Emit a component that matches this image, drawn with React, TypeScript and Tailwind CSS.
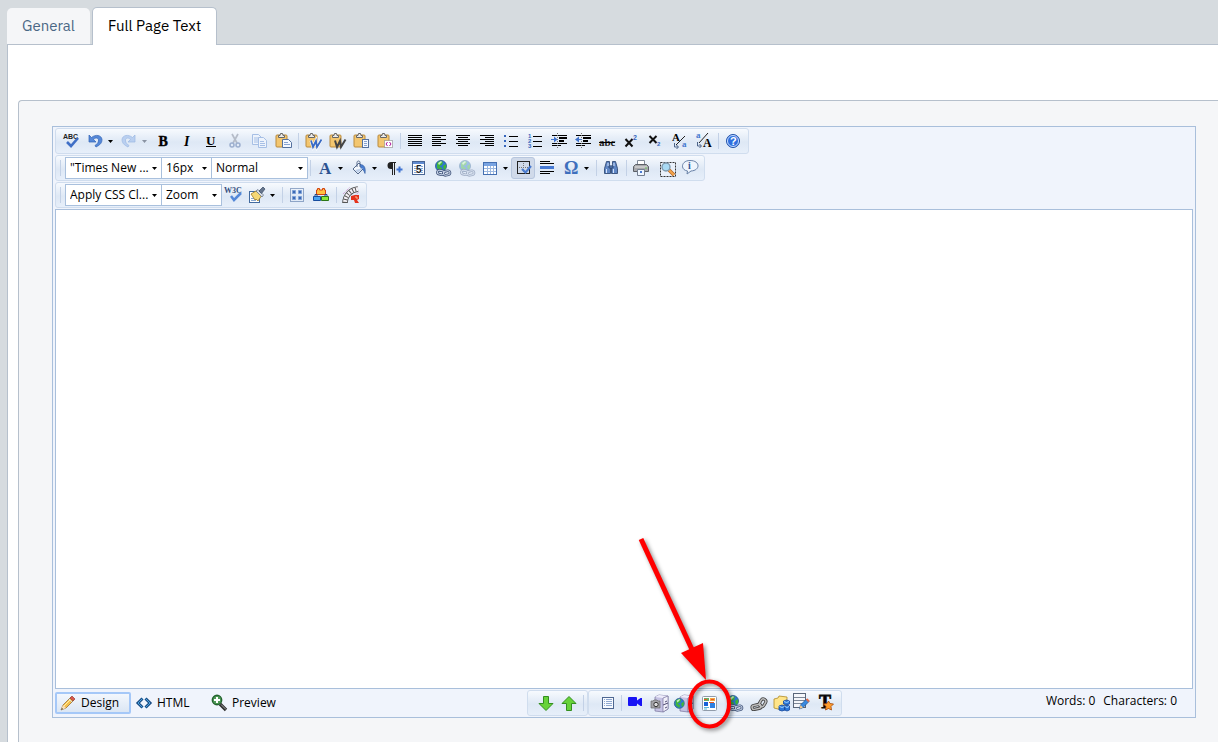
import React, { useState } from 'react';

type IconName = keyof typeof icons;

const bars = (rows: number[][], color = '#000') =>
  rows.map(([x, y, w], i) => <rect key={i} x={x} y={y} width={w} height="1" fill={color} />);

const clipboard = (
  <>
    <rect x="1" y="2" width="11" height="12" rx="1" fill="#f3c66f" stroke="#b98a3e" />
    <path d="M3.500 4.500V2.500H5L5.500 0.500h2L8 2.500h1.500v2z" fill="#ececec" stroke="#666" />
  </>
);

const cabinet = (
  <>
    <path d="M4 2l4-2 9 1v13l-5 3-8-1z" fill="#c5c2e3" stroke="#77739c" strokeWidth=".7" />
    <path d="M4 2l8 1 5-2-9-1z" fill="#eeedfb" />
    <path d="M12 3v14l5-3V1z" fill="#f1f0fa" stroke="#77739c" strokeWidth=".7" />
    <path d="M12 10l5-2M14 7l2-1M14 13l2-1" stroke="#4f4b72" fill="none" />
  </>
);

const globe = (
  <>
    <circle cx="7" cy="6" r="5.500" fill="#2f77d0" stroke="#285a86" strokeWidth=".8" />
    <path d="M3 3l3-2 3 1-1 3-3 1 3 2-1 3-4-3zM9 6l3-2v4l-2 2z" fill="#3fb53b" />
    <path d="M4 3l3-2 1 1-3 3z" fill="#c9f3bd" />
  </>
);

const chain = (
  <g fill="none">
    <g strokeWidth="2.600" stroke="#44577c">
      <rect x="3.500" y="10.500" width="6.500" height="4" rx="2" transform="rotate(12 7 12)" />
      <rect x="9.500" y="11" width="6.500" height="4" rx="2" transform="rotate(-12 13 13)" />
    </g>
    <g strokeWidth="1" stroke="#c6d2e6">
      <rect x="3.500" y="10.500" width="6.500" height="4" rx="2" transform="rotate(12 7 12)" />
      <rect x="9.500" y="11" width="6.500" height="4" rx="2" transform="rotate(-12 13 13)" />
    </g>
  </g>
);

const serif = { fontFamily: 'Liberation Serif, serif' };

const icons = {
  spell: (
    <>
      <text x="0" y="6" fontSize="7" fontWeight="bold" fontFamily="Liberation Sans, sans-serif" fill="#222">ABC</text>
      <path d="M4 9l4 4 7-8" fill="none" stroke="#3f6fc6" strokeWidth="2.600" />
    </>
  ),
  undo: (
    <path d="M2 2v7h7L6.500 6.500C9 4 12 5 11.500 8c-.3 2-1.500 3-3.500 4.500l1 1.500c4-2 6-4 6-7.500C14.500 2 8.500 1 4.500 4.500z" fill="#5588d8" stroke="#2f62b5" strokeWidth=".7" />
  ),
  redo: (
    <path d="M14 2v7H7l2.500-2.500C7 4 4 5 4.500 8c.3 2 1.500 3 3.500 4.500L7 14C3 12 1 10 1 6.500 1.500 2 7.500 1 11.500 4.500z" fill="#b9cff0" stroke="#9bb8e2" strokeWidth=".7" />
  ),
  bold: <text x="3.500" y="12.500" fontSize="14" fontWeight="bold" stroke="#000" strokeWidth=".4" {...serif}>B</text>,
  italic: <text x="5" y="12.500" fontSize="14" fontWeight="bold" fontStyle="italic" {...serif}>I</text>,
  underline: (
    <>
      <text x="3" y="11.500" fontSize="13" fontWeight="bold" {...serif}>U</text>
      <rect x="3" y="13" width="10" height="1" />
    </>
  ),
  cut: (
    <g fill="none" stroke="#9cafcf">
      <path d="M5 1l5 9M11 1l-5 9" strokeWidth="1.700" stroke="#b5bcc8" />
      <circle cx="5" cy="12" r="2" strokeWidth="1.500" />
      <circle cx="11" cy="12" r="2" strokeWidth="1.500" />
    </g>
  ),
  copy: (
    <g fill="#edf3fc" stroke="#a6bfe5">
      <path d="M1.500 1.500h6l3 3v7h-9z" />
      <path d="M3 5h5M3 7h5M3 9h5" />
      <path d="M7.500 4.500h5l3 3v7h-8z" />
      <path d="M9 8.500h4M9 10.500h5M9 12.500h5" />
    </g>
  ),
  paste: (
    <>
      {clipboard}
      <path d="M7.500 6.500h6l3 3v5h-9z" fill="#f4f8ff" stroke="#54719e" />
      <path d="M9 9.500h4M9 11.500h6" stroke="#87a2cf" />
    </>
  ),
  pasteWord: (
    <>
      {clipboard}
      <path d="M6 7.500l2 6.500 3-6 1 6 4.500-7.500" fill="none" stroke="#fff" strokeWidth="3" />
      <path d="M6 7.500l2 6.500 3-6 1 6 4.500-7.500" fill="none" stroke="#3a6bc4" strokeWidth="1.800" />
    </>
  ),
  pasteWordClean: (
    <>
      {clipboard}
      <path d="M6 7.500l2 6.500 3-6 1 6 4.500-7.500" fill="none" stroke="#444" strokeWidth="2" />
    </>
  ),
  pasteText: (
    <>
      {clipboard}
      <rect x="9.500" y="6.500" width="6" height="8" fill="#f4f8ff" stroke="#54719e" />
      <path d="M11 8.500h3M11 10.500h3M11 12.500h3" stroke="#87a2cf" />
    </>
  ),
  pasteHtml: (
    <>
      {clipboard}
      <rect x="7.500" y="7.500" width="8" height="7" fill="#fff" stroke="#777" strokeDasharray="1 1" />
      <path d="M10.500 9L9 11l1.500 2M12.500 9l1.500 2-1.500 2" fill="none" stroke="#b0169c" />
    </>
  ),
  justify: bars([[1, 2, 14], [1, 4, 14], [1, 6, 14], [1, 8, 14], [1, 10, 14], [1, 12, 14]]),
  left: bars([[1, 2, 14], [1, 4, 9], [1, 6, 14], [1, 8, 9], [1, 10, 14], [1, 12, 9]]),
  center: bars([[1, 2, 14], [3, 4, 10], [1, 6, 14], [3, 8, 10], [1, 10, 14], [3, 12, 10]]),
  right: bars([[1, 2, 14], [6, 4, 9], [1, 6, 14], [6, 8, 9], [1, 10, 14], [6, 12, 9]]),
  bullets: (
    <>
      {bars([[6, 3, 9], [6, 8, 9], [6, 13, 9]])}
      <path d="M1 2h2v2H1zM1 7h2v2H1zM1 12h2v2H1z" fill="#3565bd" />
    </>
  ),
  numbers: (
    <>
      {bars([[6, 3, 9], [6, 8, 9], [6, 13, 9]])}
      <g fontSize="6" fontWeight="bold" fill="#3565bd" fontFamily="Liberation Sans, sans-serif">
        <text x="1" y="5">1</text>
        <text x="1" y="10">2</text>
        <text x="1" y="15">3</text>
      </g>
    </>
  ),
  indent: (
    <>
      {bars([[1, 2, 15], [8, 4, 8], [8, 5, 8], [8, 7, 5], [8, 8, 5], [1, 10, 15], [1, 12, 9]])}
      <path d="M6.500 0v15" stroke="#777" strokeDasharray="1 1" />
      <path d="M0 6h3V3.500L6.500 6.500 3 9.500V7H0z" fill="#4073cc" />
    </>
  ),
  outdent: (
    <>
      {bars([[1, 2, 15], [8, 4, 8], [8, 5, 8], [8, 7, 5], [8, 8, 5], [1, 10, 15], [1, 12, 9]])}
      <path d="M6.500 0v15" stroke="#777" strokeDasharray="1 1" />
      <path d="M6.500 6H4V3.500L0 6.500l4 3V7h2.500z" fill="#4073cc" />
    </>
  ),
  strike: (
    <>
      <text x="0" y="13" fontSize="11" fontWeight="bold" fill="#222" {...serif}>abc</text>
      <rect x="0" y="9" width="16" height="1" />
    </>
  ),
  sup: (
    <>
      <path d="M2.500 6l7 7.500M9.500 6l-7 7.500" stroke="#111" strokeWidth="2" />
      <text x="10" y="7" fontSize="7" fontWeight="bold" fill="#3565bd" fontFamily="Liberation Sans, sans-serif">2</text>
    </>
  ),
  sub: (
    <>
      <path d="M2.500 3l7 7M9.500 3l-7 7" stroke="#111" strokeWidth="2" />
      <text x="10" y="13" fontSize="6" fontWeight="bold" fill="#3565bd" fontFamily="Liberation Sans, sans-serif">2</text>
    </>
  ),
  lower: (
    <>
      <text x="1" y="8" fontSize="11" fontWeight="bold" {...serif}>A</text>
      <text x="11" y="14" fontSize="9" fontWeight="bold" fill="#4679cf" {...serif}>a</text>
      <path d="M14 3L5 12" stroke="#222" />
      <path d="M3.500 10v4H7M5.500 12l2 2-2 2" fill="none" stroke="#4b6388" />
    </>
  ),
  upper: (
    <>
      <text x="1" y="5" fontSize="9" fontWeight="bold" fill="#4679cf" {...serif}>a</text>
      <text x="8" y="14" fontSize="12" fontWeight="bold" {...serif}>A</text>
      <path d="M13 0L4 10" stroke="#222" />
      <path d="M2.500 9v4H6M4.500 11l2 2-2 2" fill="none" stroke="#4b6388" />
    </>
  ),
  help: (
    <>
      <circle cx="8" cy="8" r="6.500" fill="#2e6ede" stroke="#2453a8" />
      <circle cx="8" cy="8" r="5.500" fill="none" stroke="#c6dcff" />
      <text x="5" y="12" fontSize="11" fontWeight="bold" fill="#fff" fontFamily="Liberation Sans, sans-serif">?</text>
    </>
  ),
  fore: <text x="2" y="14" fontSize="17" fontWeight="bold" fill="#2d5391" {...serif}>A</text>,
  bucket: (
    <>
      <path d="M2 9l6-6 5 5-6 6z" fill="#f3f7fc" stroke="#566b8c" />
      <path d="M6 7V2.500c0-2 3-2 3 0V7" fill="none" stroke="#566b8c" />
      <path d="M9 4.500c4 0 6 3 5 9-1-3-2-4-4-5z" fill="#4a7ed0" stroke="#2b559a" strokeWidth=".6" />
      <path d="M4 10l3 3 5-5z" fill="#bfd1eb" />
    </>
  ),
  para: (
    <>
      <path d="M10 2H5a3.500 3.500 0 0 0 0 7h1v6h1V3h1v12h1V3h1z" fill="#222" />
      <path d="M13.500 6.500v6M10.500 9.500h6" stroke="#3f73d1" strokeWidth="2" />
    </>
  ),
  style: (
    <>
      <rect x="2.500" y="1.500" width="12" height="13" fill="#fff" stroke="#4a6694" />
      <rect x="3" y="2" width="11" height="2" fill="#608bd0" />
      <path d="M4 6.500h3M4 8.500h3M4 10.500h3M4 12.500h3M11 6.500h2M11 8.500h2M11 10.500h2M11 12.500h2" stroke="#88a7d4" />
      <text x="6" y="13" fontSize="10" fontWeight="bold" fill="#222" fontFamily="Liberation Sans, sans-serif">5</text>
    </>
  ),
  link: <>{globe}{chain}</>,
  unlink: <g opacity=".4">{globe}{chain}</g>,
  table: (
    <>
      <rect x="1.500" y="2.500" width="13" height="12" fill="#fff" stroke="#4570b2" />
      <rect x="2" y="3" width="12" height="3" fill="#79a4e2" />
      <path d="M2 8.500h12M2 11.500h12M5.500 6v8M8.500 6v8M11.500 6v8" stroke="#9db9e1" />
    </>
  ),
  borders: (
    <>
      <rect x="2.500" y="1.500" width="12" height="12" fill="none" stroke="#222" />
      <path d="M8.500 3v10M4 7.500h10" stroke="#777" strokeDasharray="1 1" />
      <path d="M7 9l3.500 3.500L16 6" fill="none" stroke="#4a7bcf" strokeWidth="2.200" />
    </>
  ),
  rule: (
    <>
      {bars([[1, 1, 10], [1, 3, 14], [1, 11, 14], [1, 13, 10]])}
      <rect x="1" y="6" width="14" height="3" fill="#4679d3" />
    </>
  ),
  omega: <text x="1" y="14" fontSize="18" fontWeight="bold" fill="#3e6fbd" {...serif}>Ω</text>,
  find: (
    <g fill="#5f86c4" stroke="#263f6b" strokeWidth=".8">
      <path d="M3.500 1.500h3v3l1 3v6h-6v-5z" />
      <path d="M9.500 1.500h3l2 7v5h-6v-6l1-3z" />
      <path d="M6 6h4v2H6z" />
      <path d="M3.500 9v4M10.500 9v4M5 3v3M11 3v3" stroke="#d5e3fb" strokeWidth="1" />
    </g>
  ),
  print: (
    <>
      <path d="M4.500 6.500v-6h7v6" fill="#fff" stroke="#7f8997" />
      <path d="M.5 6.500l2-2h11l2 2v5H.5z" fill="#a8a9ac" stroke="#5c6067" />
      <path d="M2 7h12" stroke="#e7e7e7" />
      <path d="M4.500 9.500h7v6h-7z" fill="#eff6ff" stroke="#747f90" />
      <path d="M7 11h2v2h-2z" fill="#4c7bd1" />
      <path d="M12 8h2" stroke="#69c25b" />
    </>
  ),
  zoomPage: (
    <>
      <rect x="2.500" y="2.500" width="15" height="14" fill="#e9f0fa" stroke="#333" strokeDasharray="2 1" />
      <path d="M11 10l5 5" stroke="#b26725" strokeWidth="3.600" />
      <path d="M11 10l5 5" stroke="#f6a44b" strokeWidth="2" />
      <circle cx="8" cy="7" r="4" fill="#a9daf4" stroke="#7f99ad" strokeWidth="1.400" />
    </>
  ),
  info: (
    <>
      <path d="M8 .5c10.500 0 10.500 10 1 10.500l-4 3 .5-3C-2 10-1 .5 8 .5z" fill="#eff5fd" stroke="#6780a6" />
      <text x="6" y="9" fontSize="10" fontWeight="bold" fill="#315998" {...serif}>i</text>
    </>
  ),
  w3c: (
    <>
      <text x="-1" y="6" fontSize="8" fontWeight="bold" fill="#334f7e" {...serif}>W3C</text>
      <path d="M6 9l3 4 7-7" fill="none" stroke="#5488d8" strokeWidth="2.500" />
    </>
  ),
  brush: (
    <>
      <rect x=".5" y="4.500" width="10" height="11" fill="#fff" stroke="#426a9f" />
      <path d="M2 11.500h5M2 13.500h5" stroke="#88a7d0" />
      <path d="M2 7l5-3 6 4-4 6-2-2-1 1-2-3z" fill="#f6d875" stroke="#9e7b26" strokeWidth=".8" />
      <path d="M7 4l6 6 1.500-2L9 2.500z" fill="#d8dde5" stroke="#5c6a80" strokeWidth=".7" />
      <path d="M10 4l4-4 2 2-3.500 4.500z" fill="#66758c" stroke="#384a64" strokeWidth=".7" />
    </>
  ),
  moduleGrid: (
    <>
      <rect x="1.500" y="1.500" width="13" height="13" fill="none" stroke="#3b5f96" strokeDasharray="1 1" />
      <path d="M3.500 3.500h3v3h-3zM9.500 3.500h3v3h-3zM3.500 9.500h3v3h-3zM9.500 9.500h3v3h-3z" fill="#3b69b5" stroke="#7fa1d6" />
    </>
  ),
  blocks: (
    <>
      <path d="M4.500 3V1.500h2V3h3V1.500h2V3h1v4.500h-9V3z" fill="#ffc13e" stroke="#d3420f" />
      <path d="M.5 9.500h7v4h-7z" fill="#4aa4ee" stroke="#164b9d" />
      <path d="M8.500 9.500h7v4h-7z" fill="#8be83a" stroke="#2b7617" />
      <path d="M2 9V7.500h2V9M12 9V7.500h2V9" fill="none" stroke="#234c87" />
    </>
  ),
  trackChanges: (
    <>
      <path d="M2 16C2 9 7 3 15 2" fill="none" stroke="#444" strokeWidth="5.500" />
      <path d="M2 16C2 9 7 3 15 2" fill="none" stroke="#f6f3f8" strokeWidth="4" />
      <path d="M2 16C2 9 7 3 15 2" fill="none" stroke="#555" strokeWidth="4" strokeDasharray="1 2" />
      <path d="M0 7l7-7M8 12l8-7" stroke="#c988cc" strokeDasharray="1 1" />
      <path d="M8 9l4-1h4v4l-2 1 2 3h-4l-1-3H8z" fill="#e5311a" />
      <path d="M12 10h2v2" fill="none" stroke="#ffb38a" />
    </>
  ),
  down: <path d="M5.500 1.500h5v7H15l-7 7-7-7h4.500z" fill="#67d239" stroke="#338f1f" />,
  up: <path d="M5.500 15.500h5v-7H15l-7-7-7 7h4.500z" fill="#67d239" stroke="#338f1f" />,
  list: (
    <>
      <rect x="2.500" y="2.500" width="11" height="11" fill="#f7faff" stroke="#4e6791" />
      <path d="M4 4.500h1M4 6.500h1M4 8.500h1M4 10.500h1M6 4.500h6M6 6.500h6M6 8.500h6M6 10.500h6" stroke="#8fa8d0" />
    </>
  ),
  video: <path d="M1 3q0-1 1-1h7q1 0 1 1v2.500L13.500 3H15v8h-1.500L10 8.500V10q0 1-1 1H2q-1 0-1-1z" fill="#1713f5" />,
  camera: (
    <>
      {cabinet}
      <path d="M0 6h2l1-1h3l1 1h2v7H0z" fill="#a4a4a8" stroke="#666" strokeWidth=".7" />
      <circle cx="5" cy="9.500" r="2.200" fill="#ddd" stroke="#333" />
    </>
  ),
  globeCabinet: (
    <>
      {cabinet}
      <g transform="translate(-3 3) scale(.9)">{globe}</g>
    </>
  ),
  gallery: (
    <>
      <rect x="1.500" y="1.500" width="14" height="14" rx="1" fill="#fff" stroke="#919caa" />
      <rect x="3" y="3" width="5" height="3" fill="#69ae64" />
      <rect x="9" y="3" width="5" height="3" fill="#f3a743" />
      <rect x="3" y="7" width="4" height="4" fill="#1761d7" />
      <rect x="9" y="8" width="5" height="5" fill="#2d80e2" />
      <path d="M3 4.500h3M10 4.500h3M8 7.500h5" stroke="#e55b24" />
      <path d="M3 12.500h5M3 14h3" stroke="#5db8db" />
    </>
  ),
  chain: (
    <g fill="none" stroke="#444" strokeWidth="3.200">
      <rect x="1" y="10" width="9" height="4" rx="2" transform="rotate(-12 5 12)" />
      <rect x="8" y="5" width="8" height="5" rx="2.500" transform="rotate(-60 12 8)" />
      <g stroke="#bdbdbd" strokeWidth="1.500">
        <rect x="1" y="10" width="9" height="4" rx="2" transform="rotate(-12 5 12)" />
        <rect x="8" y="5" width="8" height="5" rx="2.500" transform="rotate(-60 12 8)" />
      </g>
    </g>
  ),
  folder: (
    <>
      <path d="M1 4l4-1 1-2 8 1v10l-5 3-8-2z" fill="#ffe58a" stroke="#b08a25" strokeWidth=".8" />
      <path d="M10.500 6l3-1 3 1v3l-3 1-3-1zM6 11l3-1 3 1v4l-3 1-3-1zM11.500 11l2.500-1 2.500 1v4l-2.500 1-2.500-1z" fill="#2b78da" stroke="#15489d" strokeWidth=".8" />
      <path d="M11 6.500l2.500 1 2.500-1M6.500 11.500l2.500 1 2.500-1M12 11.500l2 1 2-1" stroke="#9dd1ff" fill="none" />
    </>
  ),
  edit: (
    <>
      <rect x=".5" y="-1.500" width="12" height="14" fill="#f4f6fa" stroke="#596679" />
      <path d="M1 2.500h11M1 5.500h11M1 8.500h11" stroke="#7c8797" />
      <path d="M6.500 14l1-4 6-6 2.500 2.500-6 6z" fill="#398ae0" stroke="#1e5596" strokeWidth=".8" />
      <path d="M6.500 14l1-4 2.500 2.500z" fill="#f5c68b" />
      <path d="M13.500 4l2.500 2.500" stroke="#e36b47" strokeWidth="2" />
    </>
  ),
  fancyText: (
    <>
      <text x="1" y="13" fontSize="18" fontWeight="bold" stroke="#111" strokeWidth=".8" {...serif}>T</text>
      <path d="M10.500 6l1.500 2.500 3.500.5-2.500 2.500.5 3.500-3-1.500-3 1.500.5-3.500L5.500 9 9 8.500z" fill="#ff9d2d" stroke="#a44a0d" strokeWidth=".8" />
    </>
  ),
  pencil: (
    <>
      <path d="M1 15l2-5 8-8 3 3-8 8z" fill="#f5c04c" stroke="#8b632c" strokeWidth=".7" />
      <path d="M1 15l2-5 3 3z" fill="#f9dfb7" />
      <path d="M1 15l1-2 1 1z" fill="#333" />
      <path d="M10 3l2-2 3 3-2 2z" fill="#d9584b" stroke="#95423b" strokeWidth=".7" />
      <path d="M9 4l3 3" stroke="#d7dde3" />
      <path d="M4 11l6-6" stroke="#fff0a8" />
    </>
  ),
  html: (
    <g fill="none" stroke="#1b4e86" strokeWidth="3">
      <path d="M6.500 3.500L2 8l4.500 4.500M9.500 3.500L14 8l-4.500 4.500" />
      <path d="M6.500 3.500L2 8l4.500 4.500M9.500 3.500L14 8l-4.500 4.500" stroke="#4ba2dd" strokeWidth="1" />
    </g>
  ),
  preview: (
    <>
      <path d="M9 9l6 6" stroke="#2d2d2d" strokeWidth="3.400" />
      <path d="M10 9.500l5 5" stroke="#aaa" strokeWidth="1" />
      <circle cx="6" cy="5" r="4.700" fill="#4e9a56" stroke="#24632f" strokeWidth="1.400" />
      <path d="M6 2v6M3 5h6" stroke="#fff" strokeWidth="2" />
    </>
  ),
};

const Icon: React.FC<{ name: IconName }> = ({ name }) => (
  <svg width="16" height="16" viewBox="0 0 16 16" className="block shrink-0 overflow-visible" aria-hidden="true">
    {icons[name]}
  </svg>
);

const Tool: React.FC<{ name: IconName; label: string; width?: string; active?: boolean; children?: React.ReactNode }> = ({
  name,
  label,
  width = 'w-6',
  active,
  children,
}) => (
  <button
    type="button"
    aria-label={label}
    className={`relative flex h-[22px] shrink-0 items-center justify-center ${width} ${
      active ? 'rounded-[3px] border border-[#b7c6de] bg-[#d0daea]' : ''
    }`}
  >
    <Icon name={name} />
    {children}
  </button>
);

const SplitTool: React.FC<{ name: IconName; label: string; width?: string; dim?: boolean }> = ({
  name,
  label,
  width = 'w-[34px]',
  dim,
}) => (
  <button type="button" aria-label={label} className={`flex h-[22px] shrink-0 items-center gap-[5px] pl-1 ${width}`}>
    <Icon name={name} />
    <Caret dim={dim} />
  </button>
);

const Caret: React.FC<{ dim?: boolean }> = ({ dim }) => (
  <svg width="5" height="3" viewBox="0 0 5 3" className="block shrink-0" aria-hidden="true">
    <path d="M0 0h5L2.500 3z" fill={dim ? '#8a93a3' : '#000'} />
  </svg>
);

const Sep = () => (
  <span className="flex h-4 w-[6px] shrink-0 justify-center">
    <span className="w-px bg-[#c3d1e6]" />
  </span>
);

const Grip = () => (
  <span className="flex h-4 w-[9px] shrink-0 justify-center">
    <span className="w-px bg-[#c3d1e6]" />
  </span>
);

const Bar: React.FC<{ label: string; className?: string; children: React.ReactNode }> = ({ label, className = '', children }) => (
  <div
    role="toolbar"
    aria-label={label}
    className={`flex h-[26px] w-fit items-center rounded-[3px] border border-[#d0ddee] bg-linear-to-b from-[#f7fafe] from-0% via-[#dee8f5] via-55% to-[#e7effa] ${className}`}
  >
    {children}
  </div>
);

const Combo: React.FC<{ label: string; value: string; width: string }> = ({ label, value, width }) => (
  <label className={`relative h-[22px] shrink-0 ${width}`}>
    <select
      aria-label={label}
      className="h-full w-[calc(100%+1px)] appearance-none border border-[#a9c0dd] bg-white pl-1 text-xs text-black outline-none"
    >
      <option>{value}</option>
    </select>
    <span className="pointer-events-none absolute top-[10px] right-1">
      <Caret />
    </span>
  </label>
);

const modes: { name: IconName; label: string; width: string }[] = [
  { name: 'pencil', label: 'Design', width: 'w-[76px]' },
  { name: 'html', label: 'HTML', width: 'w-[75px]' },
  { name: 'preview', label: 'Preview', width: 'w-[80px]' },
];

const Pointer = () => (
  <svg
    width="110"
    height="200"
    viewBox="0 0 110 200"
    className="pointer-events-none absolute right-[-23px] bottom-[-20px] z-10 max-w-none drop-shadow-[2px_2px_2px_rgba(0,0,0,0.45)]"
    aria-hidden="true"
  >
    <path d="M7 5l54 117" stroke="#f00" strokeWidth="5" />
    <path d="M47 119l22-10 3 37z" fill="#f00" />
    <ellipse cx="75.500" cy="170" rx="19.500" ry="22.500" fill="none" stroke="#f00" strokeWidth="4" />
  </svg>
);

const App: React.FC = () => {
  const [tab, setTab] = useState('Full Page Text');
  const [mode, setMode] = useState('Design');

  return (
    <div className="flex min-h-screen flex-col overflow-hidden bg-[#d6dbdf] pl-[7px] font-['Open_Sans','Segoe_UI',sans-serif] text-xs text-black">
      {/* Tabs */}
      <div role="tablist" className="flex h-[45px] items-end gap-[2px] border-b border-[#b6c0cc] pt-2 font-['IBM_Plex_Sans','Noto_Sans',sans-serif] text-[15px]">
        {['General', 'Full Page Text'].map(name => (
          <button
            key={name}
            type="button"
            role="tab"
            aria-selected={tab === name}
            onClick={() => setTab(name)}
            className={`rounded-t-[5px] px-[15px] ${
              tab === name
                ? '-mb-px h-[38px] border border-b-0 border-[#b6c0cc] bg-white pb-[2px] text-black'
                : 'h-9 bg-[#f5f6f8] text-[#4a6785]'
            }`}
          >
            {name}
          </button>
        ))}
      </div>

      <div className="flex grow flex-col border-l border-[#b6c0cc] bg-white pt-[55px] pl-[10px]">
        <div className="grow rounded-tl-[4px] border-t border-l border-[#b6c0cc] bg-[#f5f6f8] pt-[25px] pr-[22px] pb-6 pl-[33px]">
          {/* Editor */}
          <div className="border border-[#a9bfdb] bg-[#f0f4fc] px-[2px]">
            <div className="flex flex-col gap-px pt-px pb-px">
              <Bar label="Formatting" className="pr-[3px] pl-[3px]">
                <Tool name="spell" label="Spell check" />
                <SplitTool name="undo" label="Undo" />
                <SplitTool name="redo" label="Redo" dim />
                <Tool name="bold" label="Bold" />
                <Tool name="italic" label="Italic" />
                <Tool name="underline" label="Underline" />
                <Tool name="cut" label="Cut" />
                <Tool name="copy" label="Copy" />
                <Tool name="paste" label="Paste" />
                <Sep />
                <Tool name="pasteWord" label="Paste from Word" />
                <Tool name="pasteWordClean" label="Paste from Word, clean" />
                <Tool name="pasteText" label="Paste plain text" />
                <Tool name="pasteHtml" label="Paste as HTML" />
                <Sep />
                <Tool name="justify" label="Justify" />
                <Tool name="left" label="Align left" />
                <Tool name="center" label="Align center" />
                <Tool name="right" label="Align right" />
                <Tool name="bullets" label="Bullet list" />
                <Tool name="numbers" label="Numbered list" />
                <Tool name="indent" label="Indent" />
                <Tool name="outdent" label="Outdent" />
                <Tool name="strike" label="Strikethrough" />
                <Tool name="sup" label="Superscript" />
                <Tool name="sub" label="Subscript" />
                <Tool name="lower" label="Lower case" />
                <Tool name="upper" label="Upper case" />
                <Sep />
                <Tool name="help" label="Help" />
              </Bar>
              <Bar label="Text and objects" className="pr-[2px]">
                <Grip />
                <Combo label="Font name" value={'"Times New ...'} width="w-24" />
                <Combo label="Font size" value="16px" width="w-[50px]" />
                <Combo label="Paragraph style" value="Normal" width="w-24" />
                <Sep />
                <SplitTool name="fore" label="Text color" />
                <SplitTool name="bucket" label="Background color" width="w-[35px]" />
                <Tool name="para" label="New paragraph" />
                <Tool name="style" label="Style builder" />
                <Tool name="link" label="Insert link" />
                <Tool name="unlink" label="Remove link" />
                <SplitTool name="table" label="Insert table" width="w-[33px]" />
                <Tool name="borders" label="Show borders" active />
                <Tool name="rule" label="Horizontal rule" />
                <SplitTool name="omega" label="Insert symbol" />
                <Sep />
                <Tool name="find" label="Find and replace" />
                <Sep />
                <Tool name="print" label="Print" />
                <Tool name="zoomPage" label="Full screen" width="w-[25px]" />
                <Tool name="info" label="About" />
              </Bar>
              <Bar label="Styles and modules" className="pr-[3px]">
                <Grip />
                <Combo label="CSS class" value="Apply CSS Cl..." width="w-24" />
                <Combo label="Zoom" value="Zoom" width="w-[60px]" />
                <Tool name="w3c" label="Validate" />
                <SplitTool name="brush" label="Strip formatting" />
                <Sep />
                <Tool name="moduleGrid" label="Toggle modules" />
                <Tool name="blocks" label="Modules" />
                <Sep />
                <Tool name="trackChanges" label="Track changes" />
              </Bar>
            </div>

            <textarea
              aria-label="Full page text"
              className="block h-[480px] w-full resize-none border border-[#a9bfdb] bg-white p-2 outline-none"
            />

            {/* Mode switch, custom tools, counters */}
            <div className="flex h-7 items-center">
              <div className="flex w-[472px] shrink-0 items-center">
                {modes.map(m => (
                  <button
                    key={m.label}
                    type="button"
                    aria-pressed={mode === m.label}
                    onClick={() => setMode(m.label)}
                    className={`flex h-[22px] items-center gap-[5px] rounded-[2px] border-2 pl-[3px] ${m.width} ${
                      mode === m.label ? 'border-[#a5c8f8] bg-linear-to-b from-[#f3f7fd] to-[#dbe6f4]' : 'border-transparent'
                    }`}
                  >
                    <Icon name={m.name} />
                    {m.label}
                  </button>
                ))}
              </div>
              <Bar label="Move" className="pr-px pl-[6px]">
                <Tool name="down" label="Move down" />
                <Tool name="up" label="Move up" width="w-[22px]" />
                <Sep />
              </Bar>
              <Bar label="Insert" className="pl-[9px]">
                <Tool name="list" label="Insert list" width="w-5" />
                <Sep />
                <Tool name="video" label="Insert video" width="w-[22px]" />
                <Tool name="camera" label="Image library" width="w-[25px]" />
                <Tool name="globeCabinet" label="Web library" width="w-[25px]" />
                <Tool name="gallery" label="Insert gallery" width="w-[25px]">
                  <Pointer />
                </Tool>
                <Tool name="link" label="Insert page link" width="w-[25px]" />
                <Tool name="chain" label="Insert anchor" width="w-[25px]" />
                <Tool name="folder" label="Insert document" width="w-5" />
                <Tool name="edit" label="Insert form" width="w-5" />
                <Tool name="fancyText" label="Insert styled text" width="w-[30px]" />
              </Bar>
              <div className="ml-auto flex gap-2 pr-4 pb-1">
                <span>Words: 0</span>
                <span>Characters: 0</span>
              </div>
            </div>
          </div>
        </div>
      </div>
    </div>
  );
};

export default App;
